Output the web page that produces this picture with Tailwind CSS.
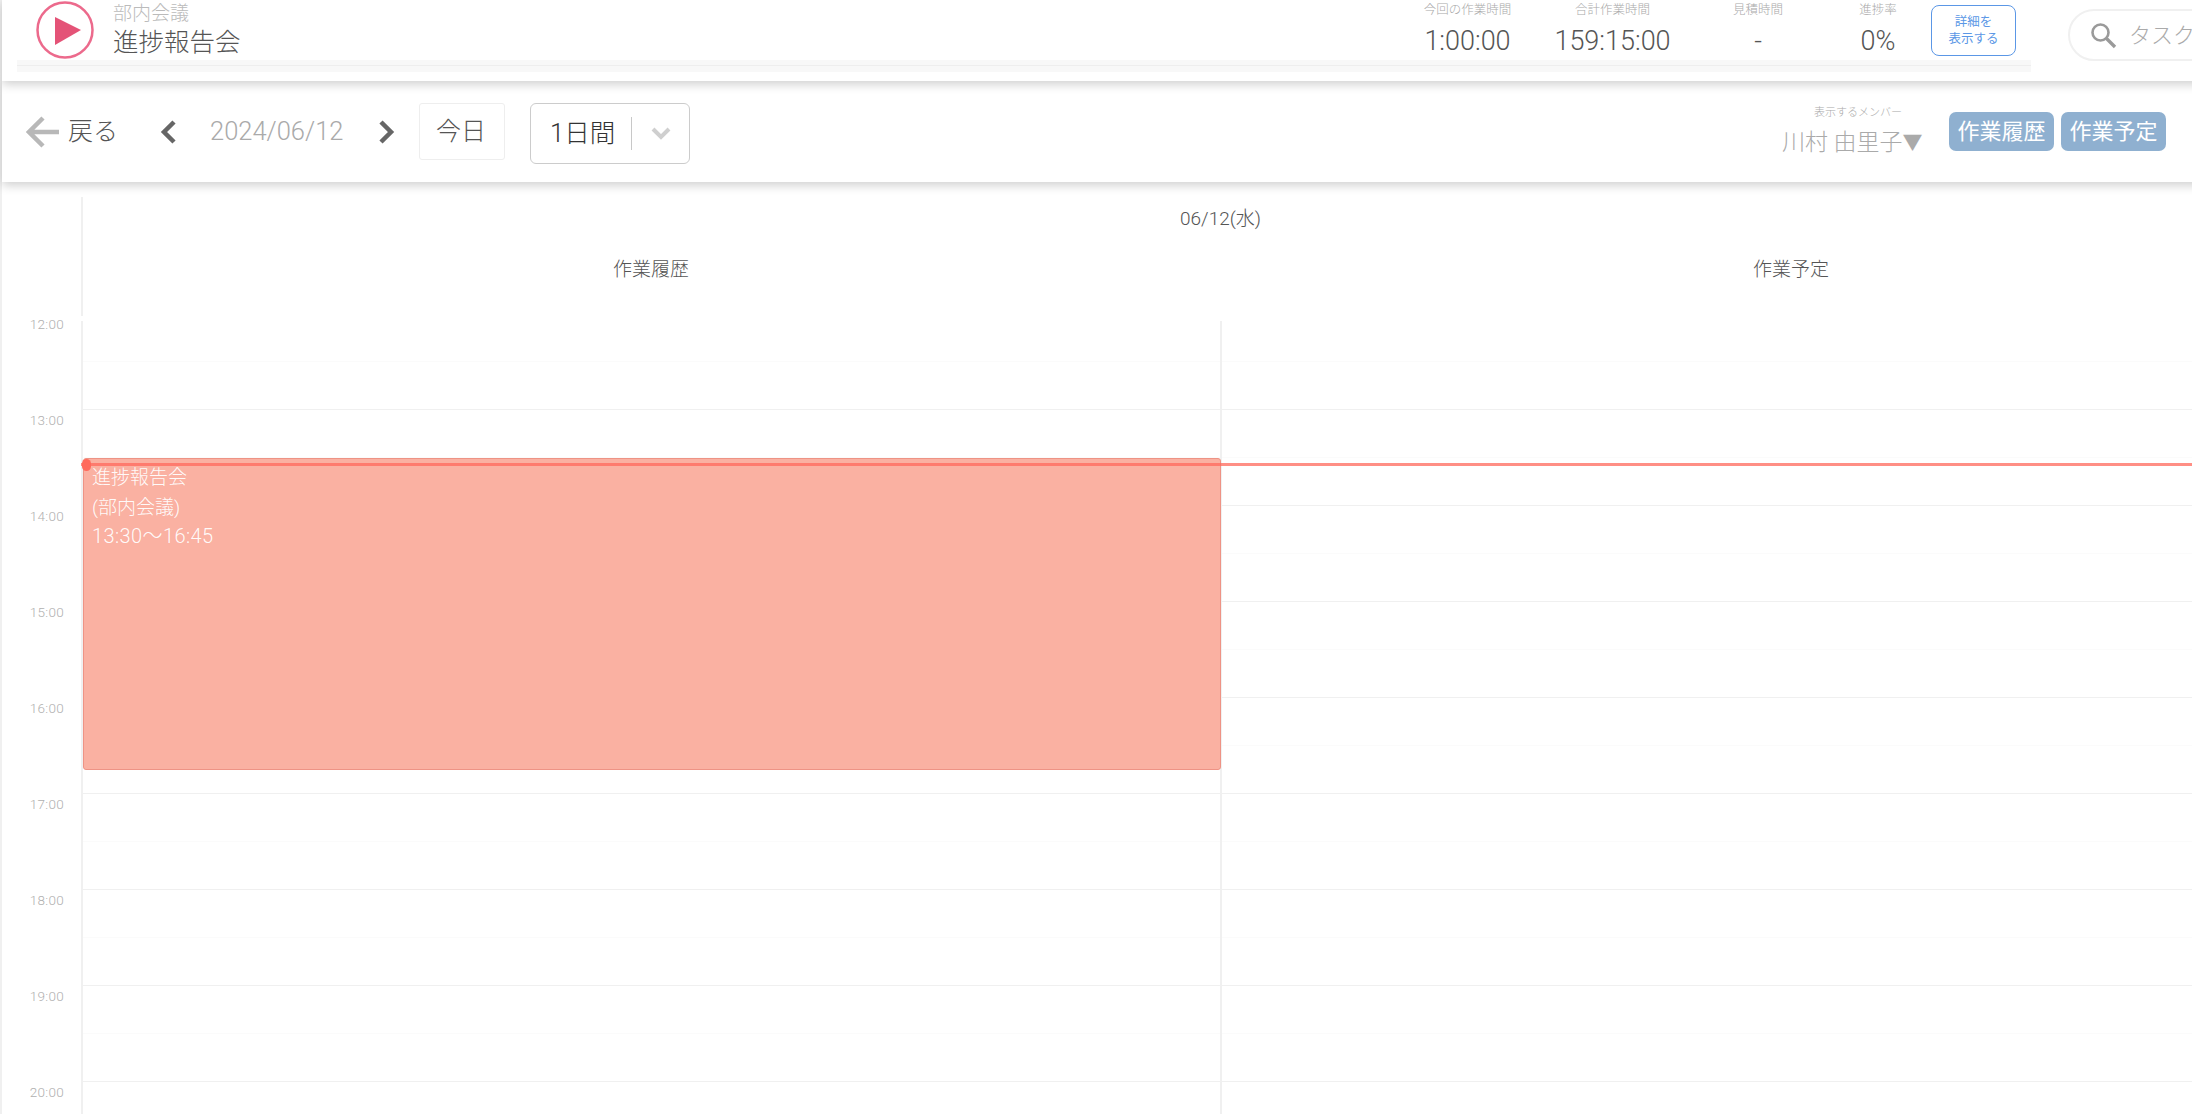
<!DOCTYPE html>
<html lang="ja">
<head>
    <meta charset="UTF-8">
    <title>進捗報告会</title>
    <script src="https://cdn.jsdelivr.net/npm/@tailwindcss/browser@4"></script>
</head>
<body class="bg-white overflow-hidden h-[1114px] font-['Roboto','Noto_Sans_CJK_JP',sans-serif] font-light text-[#555]">
<div class="w-[2360px] h-[1114px] border-l-2 border-[#f0f0f0]">

    <!-- タスクバー -->
    <header class="relative z-20 h-[81px] bg-white flex shadow-[0_3px_10px_rgba(0,0,0,0.2)]">
        <div class="ml-[15px] w-[2014px] shrink-0">
            <div class="h-[60px] flex items-center">
                <svg class="ml-[19px] w-[58px] h-[58px]" viewBox="0 0 58 58">
                    <circle cx="29" cy="29" r="27.5" fill="none" stroke="#ec6a8c" stroke-width="2.5"/>
                    <path d="M19 16 L45 29 L19 44 Z" fill="#e45377"/>
                </svg>
                <div class="ml-[19px] -mt-[1px]">
                    <div class="text-[19px] leading-[24px] text-[#bbbbbb]">部内会議</div>
                    <div class="text-[25.5px] leading-[32px] text-[#555]">進捗報告会</div>
                </div>
                <div class="ml-auto flex items-center mr-[15px]">
                    <div class="w-[120px] text-center">
                        <div class="text-[12.5px] leading-[16px] text-[#aaaaaa] pr-[1px]">今回の作業時間</div>
                        <div class="text-[27px] leading-[34px] mt-[6px] pr-[1px]">1:00:00</div>
                    </div>
                    <div class="w-[130px] ml-5 text-center">
                        <div class="text-[12.5px] leading-[16px] text-[#aaaaaa] pr-[1px]">合計作業時間</div>
                        <div class="text-[27px] leading-[34px] mt-[6px] pr-[1px]">159:15:00</div>
                    </div>
                    <div class="w-[120px] ml-5 text-center">
                        <div class="text-[12.5px] leading-[16px] text-[#aaaaaa]">見積時間</div>
                        <div class="text-[27px] leading-[34px] mt-[6px]">-</div>
                    </div>
                    <div class="w-[80px] ml-5 text-center">
                        <div class="text-[12.5px] leading-[16px] text-[#aaaaaa]">進捗率</div>
                        <div class="text-[27px] leading-[34px] mt-[6px]">0%</div>
                    </div>
                    <button class="ml-[13px] w-[85px] h-[51px] border border-[#5b97e6] rounded-[8px] text-[12.5px] leading-[17px] text-[#5b97e6] font-normal">詳細を<br>表示する</button>
                </div>
            </div>
            <div class="h-[12px] bg-[#f8f8f8] pt-[5px]"><div class="h-px bg-[#eeeeee]"></div></div>
        </div>
        <div class="ml-[37px] mt-[9px] w-[320px] h-[52px] rounded-[26px] border-2 border-[#f0f0f0] flex items-center pl-[20px]">
            <svg class="w-[27px] h-[27px]" viewBox="0 0 27 27" fill="none" stroke="#9a9a9a">
                <circle cx="10.5" cy="10.5" r="8" stroke-width="2.6"/>
                <path d="M16.5 16.5 L25 25" stroke-width="3.4"/>
            </svg>
            <span class="ml-[12px] text-[22px] text-[#aaaaaa]">タスクを検索</span>
        </div>
    </header>

    <!-- ツールバー -->
    <div class="relative z-10 h-[101px] bg-white flex items-center shadow-[0_3px_10px_rgba(0,0,0,0.2)]">
        <svg class="ml-[24px] w-[34px] h-[32px]" viewBox="0 0 34 32" fill="none" stroke="#b8b8b8" stroke-width="4.5">
            <path d="M17 2 L3 16 L17 30 M3 16 L33 16"/>
        </svg>
        <span class="ml-[8px] text-[25px] text-[#555]">戻る</span>
        <svg class="ml-[41px] w-[18px] h-[24px]" viewBox="0 0 18 24" fill="none" stroke="#666" stroke-width="4.5">
            <path d="M15 2 L5 12 L15 22"/>
        </svg>
        <span class="ml-[33px] w-[133px] text-[25.5px] text-[#aaaaaa] whitespace-nowrap">2024/06/12</span>
        <svg class="ml-[35px] w-[18px] h-[24px]" viewBox="0 0 18 24" fill="none" stroke="#666" stroke-width="4.5">
            <path d="M3 2 L13 12 L3 22"/>
        </svg>
        <button class="ml-[23px] w-[86px] h-[57px] border border-[#eeeeee] rounded-[3px] text-[25px] text-[#555] pr-[2px]">今日</button>
        <div class="ml-[25px] mt-[4px] w-[160px] h-[61px] border border-[#cccccc] rounded-[6px] flex items-center">
            <span class="ml-[19px] w-[66px] text-[25.5px] text-[#333] whitespace-nowrap">1日間</span>
            <span class="ml-[15px] w-px h-[33px] bg-[#c8c8c8]"></span>
            <svg class="ml-[19px] w-[20px] h-[13px]" viewBox="0 0 20 13" fill="none" stroke="#cfcfcf" stroke-width="4">
                <path d="M2 2 L10 10 L18 2"/>
            </svg>
        </div>
        <div class="ml-auto mr-[194px] flex items-center">
            <div class="w-[142px] -mt-[1px]">
                <div class="pl-[32px] text-[11px] leading-[16px] text-[#aaaaaa] whitespace-nowrap">表示するメンバー</div>
                <div class="mt-[7px] text-[23px] leading-[30px] text-[#aaaaaa] whitespace-nowrap">川村 由里子<span class="text-[20px]">▼</span></div>
            </div>
            <button class="ml-[25px] w-[105px] h-[39px] rounded-[7px] bg-[#8fb0d0] text-white text-[22px] font-normal">作業履歴</button>
            <button class="ml-[7px] w-[105px] h-[39px] rounded-[7px] bg-[#8fb0d0] text-white text-[22px] font-normal">作業予定</button>
        </div>
    </div>

    <!-- カレンダー見出し -->
    <div class="flex h-[134px]">
        <div class="w-[79px] shrink-0"></div>
        <div class="flex-1 mt-[15px] border-l-2 border-[#f0f0f0] text-[#555]">
            <div class="h-[44px] flex items-center justify-center text-[19px] pr-[2px]">06/12(水)</div>
            <div class="flex h-[59px] items-center text-center text-[19px]">
                <div class="w-[1139px] pr-[3px]">作業履歴</div>
                <div class="flex-1">作業予定</div>
            </div>
        </div>
    </div>

    <!-- カレンダー本体 -->
    <div class="flex h-[798px] overflow-hidden">
        <div id="times" class="w-[62px] shrink-0 text-right text-[13.5px] leading-[16px] tracking-[0.3px] text-[#b0b0b0]">
            <div class="h-[96px]">12:00</div>
            <div class="h-[96px]">13:00</div>
            <div class="h-[96px]">14:00</div>
            <div class="h-[96px]">15:00</div>
            <div class="h-[96px]">16:00</div>
            <div class="h-[96px]">17:00</div>
            <div class="h-[96px]">18:00</div>
            <div class="h-[96px]">19:00</div>
            <div class="h-[96px]">20:00</div>
        </div>
        <div class="w-[17px] shrink-0"></div>
        <div class="relative flex-1 mt-[5px] border-l-2 border-[#f0f0f0] flex">
            <div id="col-history" class="w-[1139px] border-r-2 border-[#f0f0f0]"></div>
            <div id="col-plan" class="flex-1"></div>

            <!-- 予定ブロック -->
            <div class="absolute left-0 top-[137px] w-[1138px] h-[312px] bg-[#fab1a2] border border-[#ee9385] rounded-[3px] pl-[8px] pt-[4px] text-[19px] leading-[29.5px] text-white/95">
                <div>進捗報告会</div>
                <div>(部内会議)</div>
                <div class="text-[20px] tracking-[0.4px]">13:30〜16:45</div>
            </div>
            <!-- 現在時刻 -->
            <div class="absolute left-[-2px] right-0 top-[142px] h-[3px] bg-[#ff6a5c]/75"></div>
            <div class="absolute left-[-1px] top-[138px] w-[9px] h-[12px] rounded-full bg-[#ff6a5c]"></div>
        </div>
    </div>
</div>

<script>
    // 30分ごとの罫線
    const rows = [41, 48, 48, 48, 48, 48, 48, 48, 48, 48, 48, 48, 48, 48, 48, 48, 48];
    ['col-history', 'col-plan'].forEach(id => {
        const col = document.getElementById(id);
        rows.forEach((h, i) => {
            const row = document.createElement('div');
            row.style.height = h + 'px';
            row.className = i % 2 === 0 ? 'border-b border-[#fbfbfb]' : 'border-b border-[#f0f0f0]';
            col.appendChild(row);
        });
    });
</script>
</body>
</html>
